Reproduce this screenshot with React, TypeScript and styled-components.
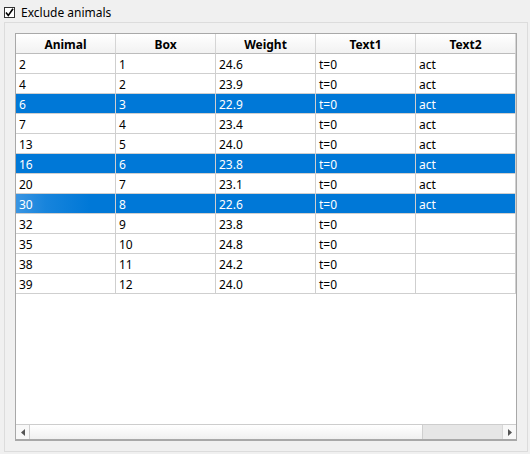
import React from "react";
import styled, { createGlobalStyle } from "styled-components";

const Global = createGlobalStyle`
  html, body { margin: 0; padding: 0; background: #f0f0f0; }
  body { font-family: "Noto Sans", "Liberation Sans", sans-serif; font-size: 12px; color: #000; }
`;

const Page = styled.div`
  width: 530px;
  height: 454px;
  box-sizing: border-box;
  display: flex;
  flex-direction: column;
  background: #f0f0f0;
`;

const CheckRow = styled.label`
  height: 22px;
  display: flex;
  align-items: center;
  gap: 6px;
  padding-left: 4px;
  padding-top: 3px;
  box-sizing: border-box;
  font-size: 12px;
`;

const Box = styled.span`
  width: 11px;
  height: 11px;
  box-sizing: border-box;
  border: 1px solid #333;
  background: #fff;
  display: flex;
  align-items: center;
  justify-content: center;
`;

const Group = styled.div`
  margin: 0 2px 2px 4px;
  flex: 1;
  border: 1px solid #dcdcdc;
  padding: 10px;
  display: flex;
`;

const Frame = styled.div`
  flex: 1;
  border: 1px solid #a8a8a8;
  border-bottom-width: 2px;
  background: #fff;
  display: flex;
  flex-direction: column;
`;

const Grid = styled.div`
  flex: 1;
  display: flex;
  flex-direction: column;
`;

const Row = styled.div<{ $sel?: boolean }>`
  display: grid;
  grid-template-columns: repeat(5, 100px);
  height: 20px;
  background: ${(p) => (p.$sel ? "#0078d7" : "#fff")};
  color: ${(p) => (p.$sel ? "#fff" : "#000")};
`;

const HeadRow = styled.div`
  display: grid;
  grid-template-columns: repeat(5, 100px);
  height: 20px;
  background: linear-gradient(#ffffff, #f1f1f1);
`;

const HeadCell = styled.div`
  box-sizing: border-box;
  border-right: 1px solid #d5d5d5;
  border-bottom: 1px solid #bcbcbc;
  font-weight: bold;
  text-align: center;
  line-height: 21px;
  overflow: hidden;
`;

const Cell = styled.div<{ $glow?: boolean }>`
  box-sizing: border-box;
  border-right: 1px solid #cfcfcf;
  border-bottom: 1px solid #cfcfcf;
  padding-left: 3px;
  line-height: 21px;
  white-space: nowrap;
  overflow: hidden;
  ${(p) => (p.$glow ? "background: linear-gradient(to right, #3a95e2, #1784dc 30%, #0078d7 75%);" : "")}
`;

const Scroll = styled.div`
  height: 14px;
  border-top: 1px solid #cdcdcd;
  display: flex;
  background: #e8e8e8;
`;

const Arrow = styled.div<{ $right?: boolean }>`
  width: 14px;
  box-sizing: border-box;
  background: #f8f8f8;
  ${(p) => (p.$right ? "border-left: 1px solid #d8d8d8;" : "border-right: 1px solid #cfcfcf;")}
  display: flex;
  align-items: center;
  justify-content: center;
`;

const Thumb = styled.div`
  width: 393px;
  box-sizing: border-box;
  border-right: 1px solid #cfcfcf;
  background: linear-gradient(#ffffff, #f0f0f0);
`;

const Track = styled.div`
  flex: 1;
  background: #e6e6e6;
`;

const rows: [string, string, string, string, string, boolean][] = [
  ["2", "1", "24.6", "t=0", "act", false],
  ["4", "2", "23.9", "t=0", "act", false],
  ["6", "3", "22.9", "t=0", "act", true],
  ["7", "4", "23.4", "t=0", "act", false],
  ["13", "5", "24.0", "t=0", "act", false],
  ["16", "6", "23.8", "t=0", "act", true],
  ["20", "7", "23.1", "t=0", "act", false],
  ["30", "8", "22.6", "t=0", "act", true],
  ["32", "9", "23.8", "t=0", "", false],
  ["35", "10", "24.8", "t=0", "", false],
  ["38", "11", "24.2", "t=0", "", false],
  ["39", "12", "24.0", "t=0", "", false],
];

export default function App() {
  return (
    <Page>
      <Global />
      <CheckRow>
        <Box>
          <svg width="9" height="9" viewBox="0 0 9 9">
            <path d="M1 4.5 L3.3 7.5 L8 0.8" fill="none" stroke="#000" strokeWidth="1.6" />
          </svg>
        </Box>
        Exclude animals
      </CheckRow>
      <Group>
        <Frame>
          <Grid>
            <HeadRow>
              {["Animal", "Box", "Weight", "Text1", "Text2"].map((h) => (
                <HeadCell key={h}>{h}</HeadCell>
              ))}
            </HeadRow>
            {rows.map((r, i) => (
              <Row key={i} $sel={r[5]}>
                {r.slice(0, 5).map((c, j) => (
                  <Cell key={j} $glow={i === 7 && j === 0}>
                    {c as string}
                  </Cell>
                ))}
              </Row>
            ))}
          </Grid>
          <Scroll>
            <Arrow>
              <svg width="4" height="7" viewBox="0 0 4 7">
                <path d="M4 0 L0 3.5 L4 7 Z" fill="#555" />
              </svg>
            </Arrow>
            <Thumb />
            <Track />
            <Arrow $right>
              <svg width="4" height="7" viewBox="0 0 4 7">
                <path d="M0 0 L4 3.5 L0 7 Z" fill="#555" />
              </svg>
            </Arrow>
          </Scroll>
        </Frame>
      </Group>
    </Page>
  );
}
